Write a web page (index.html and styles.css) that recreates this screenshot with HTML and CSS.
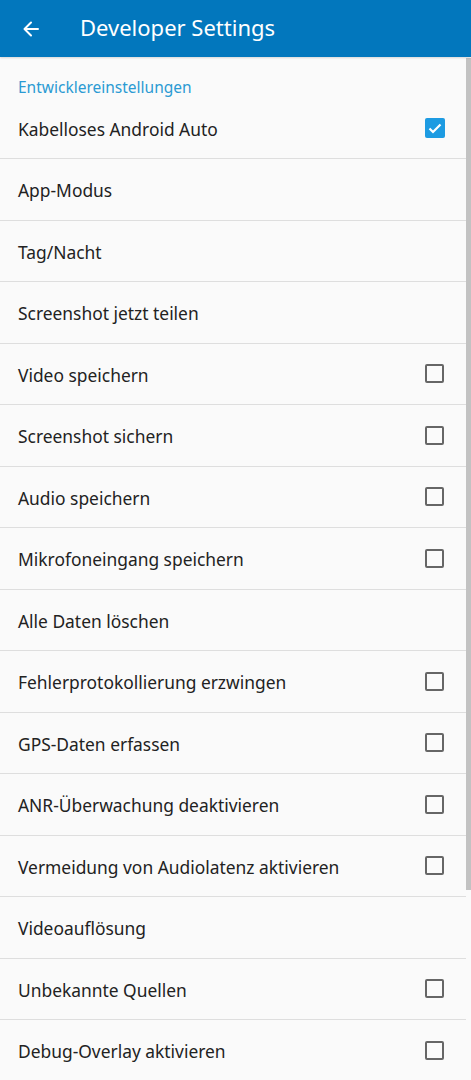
FILE: index.html
```html
<!DOCTYPE html>
<html lang="de">
<head>
  <meta charset="UTF-8">
  <title>Developer Settings</title>
  <link rel="stylesheet" href="styles.css">
</head>
<body>
  <header class="app-bar">
    <button class="back-btn" aria-label="Zurück">
      <svg width="20" height="20" viewBox="0 0 20 20">
        <path d="M17 10H4M10 3.5L3.5 10L10 16.5" fill="none" stroke="#fff" stroke-width="2" stroke-linecap="round" stroke-linejoin="round"/>
      </svg>
    </button>
    <h1>Developer Settings</h1>
  </header>

  <main class="settings">
    <div class="scrollbar"></div>
    <h2 class="section-title">Entwicklereinstellungen</h2>
    <ul class="pref-list">
      <li class="pref"><span>Kabelloses Android Auto</span><span class="check checked"></span></li>
      <li class="pref"><span>App-Modus</span></li>
      <li class="pref"><span>Tag/Nacht</span></li>
      <li class="pref"><span>Screenshot jetzt teilen</span></li>
      <li class="pref"><span>Video speichern</span><span class="check"></span></li>
      <li class="pref"><span>Screenshot sichern</span><span class="check"></span></li>
      <li class="pref"><span>Audio speichern</span><span class="check"></span></li>
      <li class="pref"><span>Mikrofoneingang speichern</span><span class="check"></span></li>
      <li class="pref"><span>Alle Daten löschen</span></li>
      <li class="pref"><span>Fehlerprotokollierung erzwingen</span><span class="check"></span></li>
      <li class="pref"><span>GPS-Daten erfassen</span><span class="check"></span></li>
      <li class="pref"><span>ANR-Überwachung deaktivieren</span><span class="check"></span></li>
      <li class="pref"><span>Vermeidung von Audiolatenz aktivieren</span><span class="check"></span></li>
      <li class="pref"><span>Videoauflösung</span></li>
      <li class="pref"><span>Unbekannte Quellen</span><span class="check"></span></li>
      <li class="pref"><span>Debug-Overlay aktivieren</span><span class="check"></span></li>
    </ul>
  </main>
</body>
</html>
```

FILE: styles.css
```css
body {
  margin: 0;
  font-family: "Noto Sans", Roboto, sans-serif;
  background-color: #fafafa;
  color: #222;
  overflow: hidden;
}

.app-bar {
  height: 57px;
  background-color: #0277bd;
  display: flex;
  align-items: center;
  box-shadow: 0 1px 2px rgba(0,0,0,0.15);
  position: relative;
  z-index: 1;
}

.back-btn {
  background: none;
  border: none;
  padding: 0;
  margin-left: 21px;
  width: 20px;
  height: 20px;
  display: flex;
}

.app-bar h1 {
  margin: 0 0 3px 39px;
  font-size: 22px;
  line-height: 28px;
  font-weight: 400;
  color: #fff;
}

.settings {
  position: relative;
}

.scrollbar {
  position: absolute;
  top: 1px;
  right: 0;
  width: 5px;
  height: 832px;
  background-color: #c2c2c2;
}

.section-title {
  margin: 0;
  padding: 20px 18px 0;
  height: 20.5px;
  font-size: 15.5px;
  line-height: 20px;
  font-weight: 400;
  color: #2b9ad3;
}

.pref-list {
  list-style: none;
  margin: 0;
  padding: 0;
}

.pref {
  height: 60.5px;
  border-bottom: 1px solid #dedede;
  margin-right: 5px;
  padding: 0 21px 0 18px;
  display: flex;
  align-items: center;
  justify-content: space-between;
  font-size: 17.4px;
}

.pref span:first-child {
  padding-top: 2px;
}

.check {
  width: 15px;
  height: 15px;
  border: 2px solid #666;
  border-radius: 2px;
  margin-right: 1px;
}

.check.checked {
  width: 20px;
  height: 20px;
  margin-right: 0;
  border: none;
  border-radius: 2px;
  background: #1d9be2 url("data:image/svg+xml;utf8,<svg xmlns='http://www.w3.org/2000/svg' viewBox='0 0 20 20'><path d='M4.5 10.5l3.5 3.5 7.5-7.5' fill='none' stroke='white' stroke-width='2.2'/></svg>") no-repeat center;
}
```
